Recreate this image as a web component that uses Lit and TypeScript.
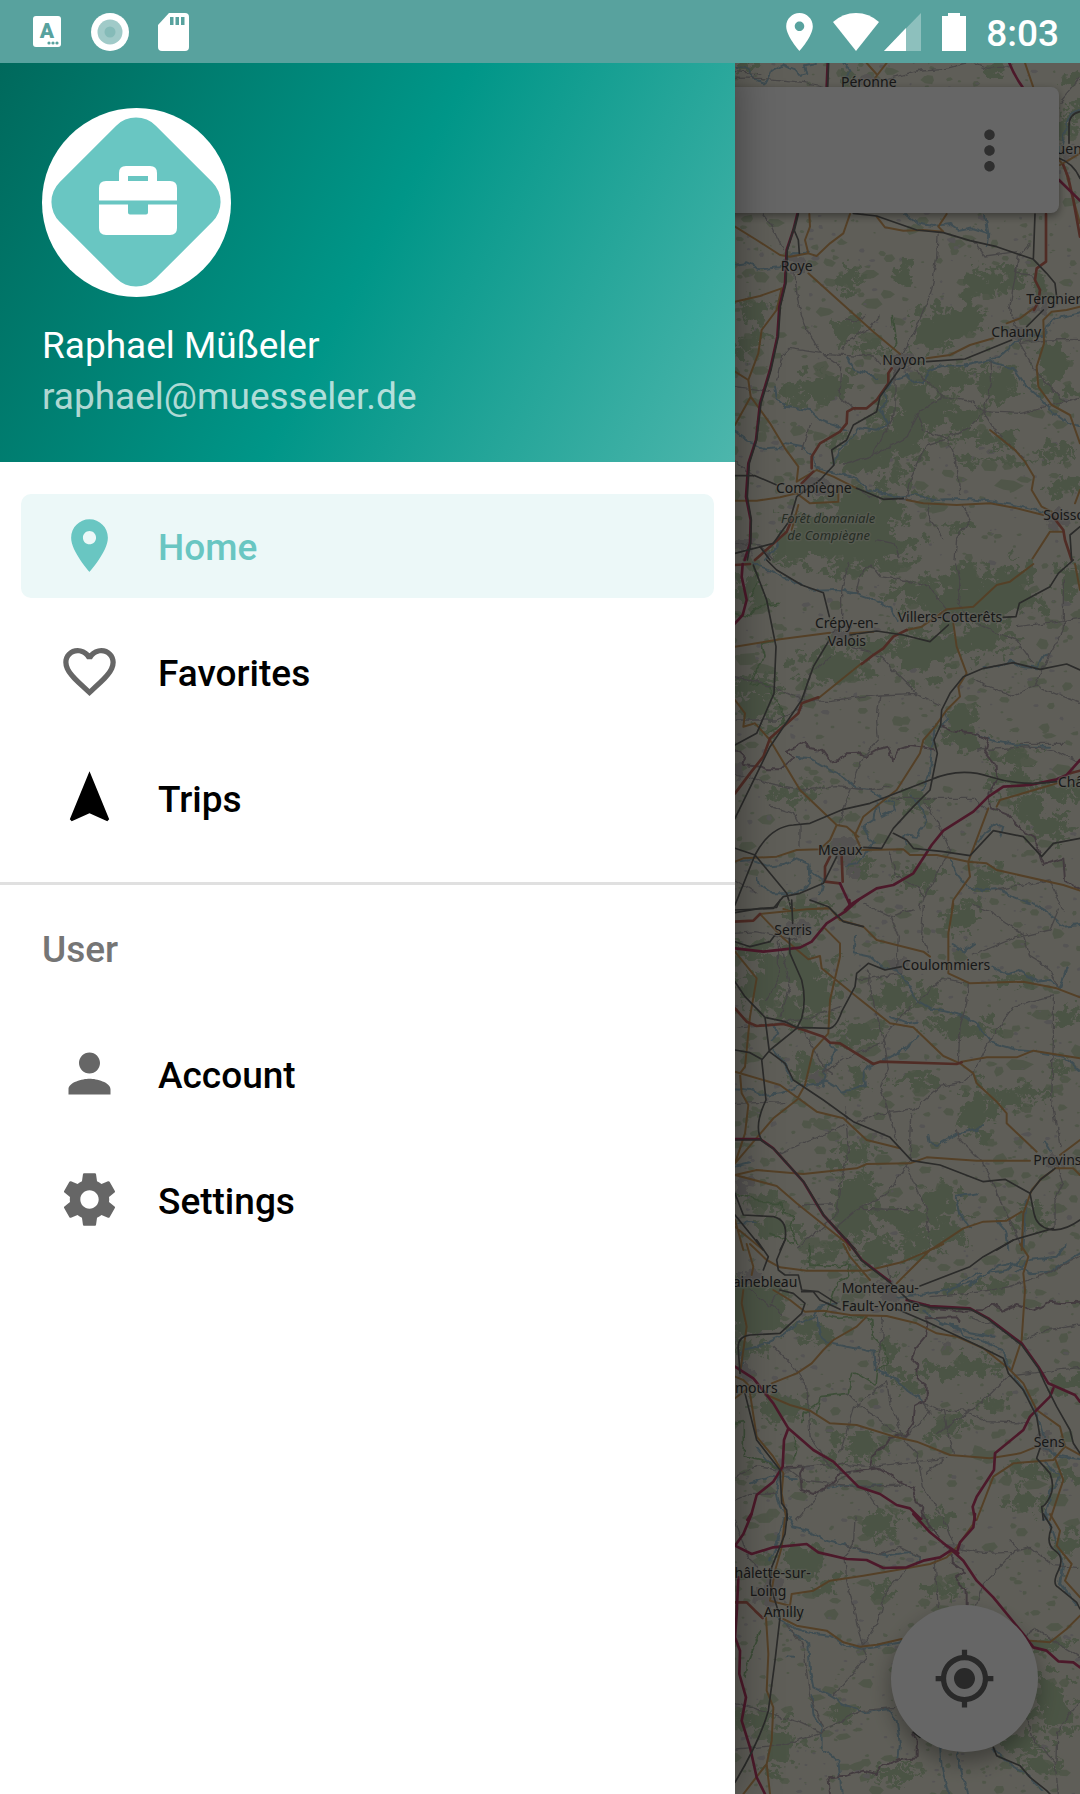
import { LitElement, html, svg, css } from "lit";
import { customElement, property } from "lit/decorators.js";
import { classMap } from "lit/directives/class-map.js";

type Blob = [number, number, number, number];
type Label = [number, number, string, string?];

interface MapSheet {
  dx: number;
  dy: number;
  woods: Blob[];
  rivers: string;
  minor: string;
  border: string;
  park: string;
  secondary: string;
  trunk: string;
  motorway: string;
  rail: string;
  towns: Blob[];
  labels: Label[];
}

/* The map is stored as sheets from north to south, at three units per pixel. */
const SHEETS: MapSheet[] = [
  {
    dx: 2100,
    dy: 0,
    woods: [[885, 213, 9, 11], [440, 235, 10, 8], [150, 200, 20, 6], [1115, 245, 8, 6], [1120, 330, 14, 16], [1090, 380, 8, 16]],
    rivers: "M105 200L140 205L165 240L200 248L215 215L250 195L285 210L300 228L322 222L315 196L345 189M430 189L448 212L440 232L470 262M1140 330L1112 345L1098 375L1092 410L1084 440",
    minor: "M105 235Q200 232 290 245T380 262M560 238L660 210L740 205L800 189M1077 310L1140 235M820 189L860 205L930 200M105 215L180 222",
    border: "",
    park: "",
    secondary: "M500 189L532 225L560 189M532 225L525 235M975 189L1000 262M1077 480Q1095 495 1104 540L1140 670M1140 460L1110 478L1080 495",
    trunk: "M1090 495L1104 530L1120 600L1140 710",
    motorway: "M383 189L380 262M928 189Q942 225 968 262M1077 540L1140 602",
    rail: "M386 189L383 262M1140 335Q1106 342 1107 380L1107 430M1077 475Q1120 490 1140 535",
    towns: [[1100, 460, 30, 20], [500, 240, 30, 14]],
    labels: [[423, 260, "Péronne"], [1037, 462, "Quentin"]],
  },
  {
    dx: 2190,
    dy: 630,
    woods: [[352, 208, 22, 22], [518, 185, 16, 20], [735, 215, 18, 35], [788, 195, 25, 25], [840, 225, 55, 25], [600, 375, 40, 50], [660, 345, 60, 35], [715, 310, 30, 25], [420, 410, 25, 15], [280, 535, 65, 35], [970, 455, 48, 60], [550, 560, 50, 45], [600, 600, 70, 50], [540, 660, 35, 60], [670, 510, 50, 25], [790, 520, 35, 40], [450, 700, 90, 40], [400, 745, 70, 45], [340, 365, 30, 25], [80, 300, 40, 18], [60, 400, 35, 20], [400, 930, 90, 90], [300, 990, 120, 60], [480, 890, 50, 45], [190, 1010, 50, 40], [420, 1010, 100, 50], [690, 630, 40, 36], [800, 690, 50, 14], [820, 750, 80, 9], [680, 950, 20, 12], [200, 560, 16, 14], [840, 520, 20, 20], [990, 720, 40, 20], [990, 830, 30, 12]],
    rivers: "M525 12L560 40L610 48L660 42L690 62L730 55L775 70L770 110M775 70L765 12M15 165L50 160L90 178L150 172L190 130L240 128M1050 310L1010 318L975 325L950 345L945 375L885 375L850 400L820 430L780 450L700 468L640 465L600 480L580 515L555 520L530 495L490 510L465 540L470 580L450 600L475 640L440 662L390 655L330 720L310 760M780 455L850 475L880 520L915 550L960 600L1000 630L1050 650M135 530L140 565L165 590L240 600L270 630L350 660M15 665L60 695L100 718L150 715L170 700L215 708L250 740L260 775L300 785L370 800L420 840L500 860L560 855L600 870L650 868L720 868L790 875L850 885L920 900L960 915M350 440L370 480L410 490L445 505M150 960L140 1010L105 1050",
    minor: "M100 12L125 45L160 120M625 65L620 140L605 240L560 350L520 430M195 190Q200 300 235 370L275 430L335 470L330 560L375 600M275 430L180 415L155 440L140 510M275 430L430 438L450 460M335 420L355 390L420 355L450 315M345 325L380 335L410 318M555 480L640 560L720 570L760 605L800 670L850 720L880 745M640 560L560 610L535 680L430 735L340 765M760 605L870 610L935 595L1010 575L1050 560M760 605L720 650L650 685L590 705L565 760L545 800L530 870M650 685L680 760L690 850M780 455L785 520L760 605M870 400L920 490L1010 580M870 400L960 390L1050 388M870 400L840 290L865 140L900 100M730 90L765 138L860 125M865 140L860 190L905 195L930 240M495 480L495 610L430 730M15 530L60 535L120 545M15 755L70 800M240 640L215 720M560 610L580 660L650 685M380 835L420 860L540 870M590 880L600 930L640 980M700 890L720 930L680 985L675 1050M15 1000L90 1005L130 1050M440 990L490 1000L510 1040",
    border: "",
    park: "M490 320L500 400L480 420",
    secondary: "M15 50L80 90L150 135L180 140L235 130L260 138L300 100L340 70L360 12M238 12L240 50L225 90L235 130M440 20L465 52L520 62L580 60L640 65L625 50L650 12M235 190L330 275L430 365L510 432M15 275L90 258L155 235L140 300L95 360L85 430L55 510L62 560L15 645M62 560L120 640L165 715L205 770L200 815L260 780L310 800L380 835M15 485L55 510M590 445L660 435L720 405L790 385M830 340L870 325L910 295M1050 290L1010 300L965 305L940 330L942 400L920 470L925 530L965 585L1020 615L1050 700M15 872L80 872L150 862L200 850L240 880L325 875L325 830M205 885L185 960M530 870L580 880L680 885L780 880L860 895L940 915M780 660L855 720L885 755L912 800L905 840L935 890L965 905M905 1050L960 965L1000 965M1050 840L1035 880",
    trunk: "M948 12L948 155L920 175L915 210L930 240L925 275L912 300M485 475L475 490L475 520L440 570L410 595L370 595L352 605L350 640L330 665L270 700L245 740L245 775M250 785L215 820M185 930L170 965L75 1050M965 915L1000 960L1005 990L1025 1050",
    motorway: "M202 12L190 60L170 120L165 220L148 290L142 380L120 480L90 580L78 690L55 760L48 860L62 930L60 1000L44 1050",
    rail: "M205 12L193 62L205 90L208 130M205 10L172 120L168 220L151 290L145 380L123 480L93 580L80 690L58 760L52 860L64 930L62 1000L52 1050M370 10L440 18L560 60L640 68L720 92L800 110L910 148L950 190L975 220L980 260M915 12L910 148M940 300L890 350M845 390L705 447L590 455M510 475L450 560L440 605L370 645L350 690L305 720L312 765L270 810L200 860L180 930L130 1000L15 1030M15 797L75 797L140 825M380 835L460 868L520 865M1050 950L1020 975L1025 1050M90 1010L120 1050",
    towns: [[200, 160, 28, 24], [520, 450, 30, 24], [265, 830, 40, 30], [990, 930, 30, 26], [940, 290, 25, 25], [870, 370, 25, 18], [40, 1010, 30, 20]],
    labels: [[152, 182, "Roye"], [889, 283, "Tergnier"], [784, 382, "Chauny"], [457, 464, "Noyon"], [138, 849, "Compiègne"], [153, 940, "Forêt domaniale", "wood"], [172, 990, "de Compiègne", "wood"], [940, 930, "Soissons"]],
  },
  {
    dx: 2190,
    dy: 1680,
    woods: [[320, 320, 80, 40], [430, 265, 70, 25], [560, 290, 60, 45], [640, 260, 60, 35], [800, 110, 80, 50], [700, 60, 70, 30], [690, 130, 140, 36], [570, 90, 50, 20], [840, 60, 45, 35], [700, 480, 40, 45], [750, 240, 60, 36], [70, 440, 50, 40], [90, 380, 40, 20], [690, 540, 50, 16], [560, 720, 26, 24], [180, 700, 40, 16], [400, 925, 24, 14], [560, 960, 40, 28], [850, 660, 50, 30], [900, 740, 36, 46], [960, 800, 36, 24], [350, 30, 24, 14], [1010, 60, 24, 34], [850, 590, 44, 16], [780, 950, 40, 20], [480, 30, 20, 12], [60, 90, 34, 30], [980, 700, 36, 26]],
    rivers: "M70 10L120 30L160 50L250 92L320 90L380 100L440 120L480 145L500 180M760 325L800 318L845 302L880 322L920 325L940 290L960 285M200 590L240 595L290 625L340 650L380 685L420 690L460 715L490 730L495 750L455 770L440 730L430 780L400 800L430 850L380 910L345 915M545 710L580 750L585 790L560 830L520 825L530 850M645 455L655 480L630 500M610 500L600 640L575 690M740 525L800 545L900 560L960 560M740 850L760 820L800 790L820 800L810 830M660 900L680 940L720 990L800 985L850 1010L900 1030M15 905L60 900L110 920L160 915L200 895L235 910L240 970L200 1000L130 1000L90 975L85 950M240 930L280 960L270 1000",
    minor: "M355 12L335 90L335 200L300 220M380 100L395 40L420 12M420 12L450 50L520 60L600 80L650 150M680 12L690 60L685 130M680 130L720 180L800 220L860 240L910 310M15 350L60 360L150 390L220 420L300 425L450 405L560 400L450 290L370 260M450 405L440 480L445 540L400 590L370 670L340 750L330 800M560 400L630 435M730 355L760 375L850 410L920 375L960 395L1050 430M920 375L935 330L1000 210L1000 60M860 200L1050 175M15 645L120 670L220 690L320 680L420 690L480 680M480 715L600 715L730 715L770 750M115 735L190 760L210 800L210 860M580 720L620 780L660 870M660 870L600 980L580 1010L570 1050M480 875L500 950L560 980L580 1010M15 480L140 480L220 440M1000 550L870 550M740 570L900 560L980 575L1050 610M300 290L240 340L220 420M15 960L80 1000M800 990L960 960L1000 1050",
    border: "M15 565L45 590L40 615L95 620L110 628L150 628L190 595L165 575L200 560L225 545L240 565L275 570L300 605L325 600L345 580L385 578L405 588L440 568L475 560L490 600L505 570L540 558L615 568M635 500L680 515L730 520L775 540L765 575L800 620L802 660L775 700L780 740L830 760L875 810L910 830L940 915L1000 895L1005 960L1050 985",
    park: "M15 160L60 170L80 140L150 130M95 250L105 290L80 330L60 375L110 370L130 410L155 450L160 490L110 520M70 20L85 70L60 110M100 250L150 240",
    secondary: "M15 260L150 238L300 218M360 220L430 215M530 210L575 200L650 148L730 140L800 75L840 65L910 12M670 190L680 260L710 340L685 380L690 410L650 450L615 500L580 540L570 580L500 690L400 770L375 825L395 870M395 310L265 415M15 420L45 460L40 500L75 490L120 540L210 690L320 795L350 800L385 830M320 795L300 840L270 868L200 870L140 890L40 895L15 905M400 870L520 868L540 885L620 885L715 905L770 910L800 930L1000 975L1050 992M715 905L775 745M715 910L720 950L670 1020L665 1050M800 740L810 720L930 685L980 670M1035 12L1050 90M160 1047L300 1045",
    trunk: "M530 210L490 230L460 265L430 285L395 312M265 412L215 430L205 460L120 535L100 590L60 640L15 700M15 15L60 12M300 890L285 920L285 965L330 970M335 890L338 965M1050 632L1020 640",
    motorway: "M38 12L35 50L50 120L38 165L15 190M330 970L360 1035L440 985L490 975L550 940L605 855L640 812L730 755L775 710L820 680L900 675L980 658L1010 645L1050 600M360 1035L345 1050",
    rail: "M70 15L110 120L138 260L132 400L80 520L15 555M110 0L140 30L215 75L280 98L298 170M298 240L250 320L215 420L120 560L15 775M360 225L440 213L520 225L600 245L655 195M820 172L858 170L868 130L960 80L985 40L1030 0M1050 330L1010 312L930 328L850 308L760 325L700 350L660 400L635 450L632 495L612 540L622 580L600 690L550 740L490 805L455 865L400 862M490 820L530 840L550 865L640 875L720 887L790 812L880 830L935 890L970 850L1050 835M15 865L75 885L170 1000L185 1050M75 885Q120 800 190 795L240 790L340 748L420 730L600 660Q690 620 780 650T980 665M75 885L15 1035M320 890L280 970L210 1000L160 1010L130 1045L15 1050",
    towns: [[345, 870, 40, 44], [335, 225, 30, 20], [30, 640, 20, 30], [660, 170, 24, 16], [370, 930, 24, 16]],
    labels: [[503, 186, "Villers-Cotterêts"], [255, 204, "Crépy-en-"], [293, 257, "Valois"], [984, 680, "Château-Thierry"], [264, 885, "Meaux"]],
  },
  {
    dx: 2190,
    dy: 2700,
    woods: [[700, 50, 30, 30], [210, 205, 60, 60], [130, 225, 40, 50], [90, 260, 60, 46], [260, 290, 44, 46], [180, 340, 50, 26], [500, 290, 40, 38], [580, 300, 22, 14], [400, 400, 42, 28], [540, 535, 40, 16], [390, 540, 18, 30], [740, 640, 28, 48], [830, 600, 50, 18], [890, 578, 36, 12], [380, 765, 46, 22], [380, 880, 56, 42], [360, 950, 56, 56], [520, 955, 75, 28], [630, 900, 46, 42], [640, 1000, 56, 30], [900, 950, 36, 26], [1010, 350, 22, 14], [720, 390, 44, 22], [640, 370, 30, 12], [990, 500, 18, 16], [230, 500, 26, 26], [90, 900, 50, 12], [120, 980, 50, 22], [850, 240, 30, 10], [60, 150, 34, 14], [250, 30, 20, 18], [200, 30, 20, 12]],
    rivers: "M910 12L960 40L1000 80L1050 75M375 110L370 160L420 170L460 205L500 210L530 250L560 300L600 325L690 345L740 370L790 430L860 450L920 455L1000 470L1050 510M790 200L830 220L870 210L920 245L960 240L990 265L1010 205M665 135L700 155L735 130M480 350L530 370L560 365M565 405L520 450L460 480M430 495L400 515L405 555L340 575L290 545L230 555L205 560L150 580L100 585L60 570L15 565M300 430L320 450L290 500L275 560M130 380L145 400L125 420M130 450L170 500L185 540M595 705L600 730L625 735L680 700L740 690L760 675M945 725L965 760M680 890L740 880M680 890L690 940L720 985M800 965L830 1000L835 1050M890 900L880 1050M15 970L80 965M15 800L60 790",
    minor: "M400 12L480 50L505 110L500 200M580 12L575 110L595 160M725 12L790 40L880 105L900 170L950 200L985 260M730 165L850 115L960 90L985 30M480 50L550 30M145 120L145 240L110 300M150 130L180 260L150 350M380 240L515 220M415 210L430 320L465 430L475 510L450 560L470 620L500 720M540 320L470 400L460 425L340 480L280 520M555 310L640 235L715 250L710 310L690 380L685 485M970 290L850 320L780 420L730 520L700 545L630 560L550 630L440 640L380 670M970 290L970 420L965 600L990 740M15 610L170 605M15 385L70 380L240 355L330 320M220 390L280 500L310 520M350 680L355 760L330 850L320 950L200 1040M545 645L540 780L470 885L380 930L320 980M530 800L590 930L600 1050M150 760L240 720L350 675M680 690L685 715L760 790L880 1050M980 780L1000 850L975 900L975 980M390 925L550 930M15 100L80 95L200 120M345 620L350 660M205 915L310 912",
    border: "",
    park: "M15 880L60 890L100 910L155 910L160 940L190 945L180 980L200 1030M120 1000L190 1030",
    secondary: "M90 42L230 28L300 25L330 60L400 80L440 120L580 155L600 170M670 12L655 100L655 220L720 250L880 245L980 265L1050 292M90 42L160 115L235 178L270 168L275 205L380 290L480 370L550 382L640 468L690 490L730 520L740 550L800 605L830 640L830 670L920 755M285 85L330 130L330 170L300 300L295 400L250 450L225 555L200 600L130 655L15 790M695 485L770 472L860 472L910 452L1050 475M15 515L150 555L260 635L340 655L410 720L510 745M15 155L80 235L60 350L45 500L30 520L35 580L55 615L45 700L15 790M15 825L80 810L220 822L380 805L410 792L540 790L590 772L740 782L900 782M15 825L140 858L200 910L350 1030L360 1050M1050 720L990 765M975 805L1030 805L1050 825M970 810L935 835L905 870L880 940L875 1050M600 1050L640 1025L700 985L760 965L830 962L875 935M15 960L40 1050M15 980L100 1050",
    trunk: "M15 65L70 62L90 42M15 325L50 365L80 378L160 372L215 388L280 410L300 428L330 430L430 492L450 485L680 492L695 487",
    motorway: "M15 145L100 155L210 143L245 125L290 70L345 35L385 0M358 0L360 22M15 717L90 717L130 745L220 845L280 945L375 1050",
    rail: "M15 38L90 25L140 22L150 0M185 0L188 70M178 115L180 160L215 240Q230 300 215 355L200 385L120 450L95 480M240 0L295 20L340 65L400 80M15 125L60 140L120 125L135 105M15 245L45 290L105 352L165 365L200 382L300 385Q320 380 335 335L375 260L380 220L415 190L465 210L515 200M105 352L118 455L165 490L190 540L280 600L370 665L480 712L545 782L630 795L760 845L825 838L900 880L912 940Q920 980 960 988T1050 960M15 450L60 458L95 478L108 600Q70 680 95 720M15 720L92 720L133 748L223 848L283 948L378 1050M15 880L40 945L130 950Q175 960 165 1020L150 1050M15 945L100 1050M975 805L930 840L900 880M800 1050L850 1020L970 985",
    towns: [[40, 860, 24, 30], [200, 90, 30, 24], [500, 195, 24, 18], [440, 710, 20, 14], [975, 780, 30, 24], [270, 530, 24, 16]],
    labels: [[133, 105, "Serris"], [516, 209, "Coulommiers"], [910, 796, "Provins"]],
  },
  {
    dx: 2190,
    dy: 3720,
    woods: [[80, 210, 110, 66], [440, 40, 56, 40], [290, 50, 50, 18], [560, 20, 40, 20], [160, 500, 66, 36], [640, 390, 80, 10], [720, 380, 46, 26], [400, 610, 44, 26], [60, 320, 34, 14], [700, 140, 60, 12], [1000, 430, 36, 16], [640, 560, 34, 22], [900, 700, 40, 18], [880, 780, 36, 30], [1000, 700, 34, 12], [250, 260, 30, 26], [530, 440, 26, 14], [300, 660, 30, 12], [760, 490, 34, 10], [470, 350, 12, 30]],
    rivers: "M1050 40L1000 70L960 95L900 100L850 70L800 80L740 120L680 140L630 155L570 165L500 170M750 100L700 120L650 160M880 50L830 90L770 100L720 135M1010 12L980 50L900 60L860 95M320 190L270 200L250 230L200 250L150 290L100 315L40 330L35 380M300 310L350 320L430 335L435 390L490 410L530 450L580 485M580 215L620 240L690 270L700 290L760 300L820 330L835 380L870 430L920 520L950 620M660 250L720 280L790 290M260 230L275 290L300 310M80 620L110 660L150 690L140 760L150 800L180 840M60 730L120 710L200 715M285 745L350 735L400 740L450 735M945 625L980 650L1050 660M940 660L990 710L960 760L945 840M970 640L1020 650",
    minor: "M470 75L480 120M600 170L720 160L840 140L950 100L1050 50M120 190L160 230M60 150L120 200L160 130M130 320L190 380L230 440L235 510M235 510L240 590L300 680L340 700M460 230L455 300L440 390M470 425L480 490L520 590M470 425L370 505L330 640M520 595L370 480L350 460M520 600L560 640L580 740L640 840M520 595L600 520L580 490L640 512L700 510L770 545L900 550M640 512L670 640M620 580L740 500L830 410L900 400L1050 382M720 230L800 260L870 310M880 300L950 270L1050 255M15 710L80 680L150 690L300 670L420 680L650 655M380 690L280 750L200 840M180 690L220 720L380 740L520 735M15 780L60 760L140 760M400 740L440 800L450 840M640 660L590 700",
    border: "M570 195L620 205L700 212L760 210L790 190L820 212L860 195L910 212L960 185L1000 190L1050 188M690 245L680 232L590 235L585 290L560 320L545 355L565 375L560 415L590 440L590 480L555 500L550 550L525 585L480 590L470 615L430 635L420 680L450 685L490 710L520 730L550 740L560 790L580 800L575 840M450 685L330 700L300 735L250 762L215 750L210 700L220 680L160 680",
    park: "M235 12L240 75L330 80L360 70L355 110L320 130L300 190L280 225L330 235L400 230L425 240L430 290L460 320L475 370L440 395L435 435L380 400L365 400L355 460L270 470L260 520M15 550L40 545L40 650L110 665L150 690M190 590L200 630L190 660M260 490L220 520L215 550",
    secondary: "M50 12L70 80L65 105M60 12L110 60L150 82L230 92L410 92L520 65L590 35L640 12M340 12L360 50L420 120M600 30L555 75L520 110L500 130M870 12L895 50L880 100L885 150L875 300L845 390M130 150L180 180L225 215L280 212L360 225L470 228L560 250L620 280L680 290L760 325L830 380L880 430L920 510L990 560L1005 620L970 660L850 670L790 710L740 840M410 230L380 260L310 300L280 330L245 370L200 400L125 430M110 465L180 495L240 512L300 550L380 555L500 592L560 605L660 645L780 655L870 640L920 620M15 475L60 440L40 420L15 410M40 150L35 190L50 260L30 400M60 460L80 590L130 650L160 700L155 760L170 840M1005 620L1050 645M975 655L1000 720L960 840",
    trunk: "",
    motorway: "M350 0L395 60L480 125M530 180L600 198L720 205L775 235L875 310L925 380L955 430L1035 465L1050 485M15 380L70 415L130 490L175 565L250 630L310 665L385 740L450 762L500 795L540 805L575 840M175 565L162 600L158 680L130 725L80 765L65 820L52 840M970 445L960 470L900 530L880 570L795 640L792 690L740 770L728 800L735 840",
    rail: "M80 0L115 50L100 90M165 0L140 60L145 90L165 105L205 105L215 150L265 155L320 190M150 150L190 160L225 190L215 220L150 280L60 285Q20 290 25 330L30 400M215 155L250 155L270 180L330 208M352 0L395 62L480 128L540 185L600 202L722 208L775 238L875 315L925 385L945 430L980 500L1020 570L1030 610L1050 640M570 138L720 80L760 50L850 0M495 205L600 250L740 315L820 355L835 400L880 450L920 530L930 590M930 625L920 655L960 700Q975 740 960 770T935 800L940 840M45 460L80 600L150 690L155 790L170 810L172 840",
    towns: [[470, 160, 30, 24], [60, 110, 30, 14], [950, 610, 34, 30], [650, 315, 12, 14], [50, 400, 20, 20], [150, 690, 14, 14]],
    labels: [[202, 141, "Fontainebleau", "end"], [335, 160, "Montereau-"], [335, 213, "Fault-Yonne"], [143, 458, "Nemours", "end"], [911, 622, "Sens"]],
  },
  {
    dx: 2190,
    dy: 4542,
    woods: [[220, 150, 60, 50], [440, 30, 50, 24], [1020, 90, 26, 22], [960, 540, 40, 44], [985, 600, 44, 44], [860, 690, 50, 20], [150, 700, 40, 50], [80, 620, 26, 26], [650, 230, 30, 16], [450, 230, 20, 14], [980, 390, 34, 14], [500, 780, 40, 20], [340, 600, 24, 14], [930, 750, 40, 18], [620, 20, 24, 20]],
    rivers: "M180 12L190 40L230 50L290 80L350 95L400 110L470 125L530 115L570 130L560 150M160 12L145 80L120 140M140 310L200 345L250 360L300 365L350 395L400 405L460 395L515 385M180 350L235 390L240 470L250 520L300 545L350 575L400 595L480 585L500 620L510 690L505 730M245 540L250 600L275 640L275 700L325 740L335 840M630 700L635 760L655 840M680 700L690 760L715 840M950 0L975 70L1000 150L990 210L1040 270M790 705L840 750L890 780L940 830M170 427L187 428",
    minor: "M15 15L50 120L100 180M375 12L370 90L345 130L350 200L370 270L380 330L400 390M400 390L440 330L470 230L530 165M400 405L410 430L350 500L310 545M350 95L450 120L510 100L570 130M690 105L760 118L850 115L900 100L970 155L1040 160M850 115L760 210L740 270M870 110L840 80M615 130L620 220L625 280M15 565L110 595L210 625L275 655L310 635L390 590L500 580M170 330L220 400L240 550L280 640M15 705L80 700L170 690L275 655M640 12L670 90M890 610L905 670L975 745L985 840M1050 560L980 655L978 745M890 370L910 340L1000 400L1050 430",
    border: "M580 0L600 40L640 90L665 110L665 145L705 175L680 190L685 210L710 230L710 275M550 655L560 680L560 730L510 735L450 760L440 780L400 770L350 785L295 790L300 840",
    park: "M90 350L70 400L50 450L45 490",
    secondary: "M165 12L155 100L135 170L120 260L180 275L185 240L250 230L300 200L400 185L500 168L600 150L650 130L680 100L730 30L735 0M160 315L200 335L290 350L340 385L390 398L440 392L515 375M108 310L115 420L110 530L130 580L125 680L110 750L120 840M110 750L40 840M960 0L990 50L980 95L1025 150L1005 200L1050 250M900 380L960 385L1010 345L1050 305",
    trunk: "M15 265L50 265L75 290L98 312",
    motorway: "M65 0L40 60L15 95L65 120L130 100L230 90L265 115L350 135L410 138L460 162L530 160L580 140L630 130L665 108L700 140L740 200L790 250L880 360L910 400L950 410L985 442L1030 445L1050 460M550 0L600 55L650 95L685 118M735 0L730 40L690 85L680 118M25 190L20 300L15 370L30 410L28 480L48 550L35 620L60 700L80 790L105 840",
    rail: "M172 0L165 60L125 160L120 210L150 310L135 440L115 590Q90 680 15 805M940 0L965 40Q945 90 975 110T985 170T985 220L1040 265L1050 285M550 655L570 670M790 700L800 725L870 755L900 790L950 830L960 840",
    towns: [[120, 230, 40, 50], [670, 105, 16, 16], [400, 395, 16, 12], [760, 440, 16, 12]],
    labels: [[242, 192, "Châlette-sur-", "end"], [59, 246, "Loing"], [101, 308, "Amilly"]],
  },
];

/* Small deterministic generator, so that the map is the same on every load. */
function randomFrom(seed: number): () => number {
  let s = seed;
  return () => {
    s = (s * 16807) % 2147483647;
    return s / 2147483647;
  };
}

function patch([cx, cy, rx, ry]: Blob, rnd: () => number, points: number): string {
  let d = "";
  for (let i = 0; i < points; i++) {
    const a = (i / points) * Math.PI * 2;
    const k = 0.75 + rnd() * 0.6;
    const x = Math.round(cx + Math.cos(a) * rx * k);
    const y = Math.round(cy + Math.sin(a) * ry * k);
    d += (i ? "L" : "M") + x + " " + y;
  }
  return d + "Z";
}

/* A wood and the small groves that lie round its edge. */
function wood(b: Blob, rnd: () => number): string {
  let d = patch(b, rnd, 16);
  for (let i = 0; i < 9; i++) {
    const a = rnd() * Math.PI * 2;
    const k = 1.2 + rnd() * 0.8;
    const r = 3 + rnd() * 11;
    d += patch([b[0] + Math.cos(a) * b[2] * k, b[1] + Math.sin(a) * b[3] * k, r * 1.6, r], rnd, 7);
  }
  return d;
}

function copses(count: number, seed: number, size: number): string {
  const rnd = randomFrom(seed);
  let d = "";
  for (let i = 0; i < count; i++) {
    const x = 2190 + rnd() * 1050;
    const y = 189 + rnd() * 5193;
    const r = 2 + rnd() * rnd() * size;
    d += patch([x, y, r * (1 + rnd()), r], rnd, 6);
  }
  return d;
}

@customElement("region-map")
export class RegionMap extends LitElement {
  static styles = css`
    :host { display: block; background: #eeecdc; }
    svg { display: block; width: 100%; height: 100%; }
    path { fill: none; stroke-linejoin: round; stroke-linecap: round; }
    .wood { fill: #bbd3ac; fill-rule: nonzero; }
    .copse { fill: #c8d8b7; }
    .town { fill: #d2cecb; }
    .hamlet { fill: #d5d1d2; }
    .river { stroke: #9fc0cd; stroke-width: 6; }
    .minor { stroke: #b3afb0; stroke-width: 4; }
    .border { stroke: #a8959f; stroke-width: 6; }
    .park { stroke: #9cc38f; stroke-width: 5; }
    .secondary { stroke: #d3a062; stroke-width: 6; }
    .trunk { stroke: #c86e5e; stroke-width: 8; }
    .motorway { stroke: #bf3f69; stroke-width: 8; }
    .rail { stroke: #6b6b69; stroke-width: 5; }
    text {
      font: 42px "Noto Sans", "Open Sans", sans-serif;
      fill: #3c3c3c;
      stroke: rgba(238, 236, 225, 0.5);
      stroke-width: 8px;
      paint-order: stroke;
      stroke-linejoin: round;
    }
    .end { text-anchor: end; }
    .forest-name { font-style: italic; font-size: 39px; fill: #60705c; }
  `;

  private sheet(s: MapSheet, index: number) {
    const rnd = randomFrom(97 + index * 31);
    const at = `translate(${s.dx} ${s.dy})`;
    const woods = s.woods.map((b) => wood(b, rnd)).join("");
    const towns = s.towns.map((b) => patch(b, rnd, 12)).join("");
    return svg`
      <g transform=${at}>
        <g filter="url(#rough)">
          <path class="wood" d=${woods}></path>
          <path class="town" d=${towns}></path>
        </g>
        <g filter="url(#wavy)">
          <path class="river" d=${s.rivers}></path>
          <path class="border" d=${s.border}></path>
          <path class="park" d=${s.park}></path>
          <path class="minor" d=${s.minor}></path>
        </g>
        <path class="secondary" d=${s.secondary}></path>
        <path class="trunk" d=${s.trunk}></path>
        <path class="motorway" d=${s.motorway}></path>
        <path class="rail" d=${s.rail}></path>
      </g>`;
  }

  private names(s: MapSheet) {
    return svg`
      <g transform=${`translate(${s.dx} ${s.dy})`}>
        ${s.labels.map(
          ([x, y, name, kind]) => svg`
            <text x=${x} y=${y} class=${classMap({ end: kind === "end", "forest-name": kind === "wood" })}>${name}</text>`
        )}
      </g>`;
  }

  render() {
    return html`
      <svg viewBox="0 189 3240 5193" preserveAspectRatio="xMaxYMin slice" role="img" aria-label="Map">
        <defs>
          <filter id="rough" filterUnits="userSpaceOnUse" x="0" y="-60" width="1200" height="1200">
            <feTurbulence type="fractalNoise" baseFrequency="0.035" numOctaves="3" seed="4"></feTurbulence>
            <feDisplacementMap in="SourceGraphic" scale="64" xChannelSelector="R" yChannelSelector="G"></feDisplacementMap>
          </filter>
          <filter id="wavy" filterUnits="userSpaceOnUse" x="0" y="-60" width="1200" height="1200">
            <feTurbulence type="fractalNoise" baseFrequency="0.04" numOctaves="2" seed="9"></feTurbulence>
            <feDisplacementMap in="SourceGraphic" scale="18" xChannelSelector="R" yChannelSelector="G"></feDisplacementMap>
          </filter>
        </defs>
        <path class="copse" d=${copses(2200, 11, 18)}></path>
        <path class="hamlet" d=${copses(900, 53, 7)}></path>
        ${SHEETS.map((s, i) => this.sheet(s, i))}
        ${SHEETS.map((s) => this.names(s))}
      </svg>`;
  }
}

const ICONS = {
  place: "M12 2C8.13 2 5 5.13 5 9c0 5.25 7 13 7 13s7-7.75 7-13c0-3.87-3.13-7-7-7zm0 9.5c-1.38 0-2.5-1.12-2.5-2.5s1.12-2.5 2.5-2.5 2.5 1.12 2.5 2.5-1.12 2.5-2.5 2.5z",
  heart: "M16.5 3c-1.74 0-3.41.81-4.5 2.09C10.91 3.81 9.24 3 7.5 3 4.42 3 2 5.42 2 8.5c0 3.78 3.4 6.86 8.55 11.54L12 21.35l1.45-1.32C18.6 15.36 22 12.28 22 8.5 22 5.42 19.58 3 16.5 3zm-4.4 15.55l-.1.1-.1-.1C7.14 14.24 4 11.39 4 8.5 4 6.5 5.5 5 7.5 5c1.54 0 3.04.99 3.57 2.36h1.87C13.46 5.99 14.96 5 16.5 5c2 0 3.5 1.5 3.5 3.5 0 2.89-3.14 5.74-7.9 10.05z",
  navigation: "M12 2L4.5 20.29l.71.71L12 18l6.79 3 .71-.71z",
  person: "M12 12c2.21 0 4-1.79 4-4s-1.79-4-4-4-4 1.79-4 4 1.79 4 4 4zm0 2c-2.67 0-8 1.34-8 4v2h16v-2c0-2.66-5.33-4-8-4z",
  settings: "M19.43 12.98c.04-.32.07-.64.07-.98s-.03-.66-.07-.98l2.11-1.65c.19-.15.24-.42.12-.64l-2-3.46c-.12-.22-.39-.3-.61-.22l-2.49 1c-.52-.4-1.08-.73-1.69-.98l-.38-2.65C14.46 2.18 14.25 2 14 2h-4c-.25 0-.46.18-.49.42l-.38 2.65c-.61.25-1.17.59-1.69.98l-2.49-1c-.23-.09-.49 0-.61.22l-2 3.46c-.13.22-.07.49.12.64l2.11 1.65c-.04.32-.07.65-.07.98s.03.66.07.98l-2.11 1.65c-.19.15-.24.42-.12.64l2 3.46c.12.22.39.3.61.22l2.49-1c.52.4 1.08.73 1.69.98l.38 2.65c.03.24.24.42.49.42h4c.25 0 .46-.18.49-.42l.38-2.65c.61-.25 1.17-.59 1.69-.98l2.49 1c.23.09.49 0 .61-.22l2-3.46c.12-.22.07-.49-.12-.64l-2.11-1.65zM12 15.5c-1.93 0-3.5-1.57-3.5-3.5s1.57-3.5 3.5-3.5 3.5 1.57 3.5 3.5-1.57 3.5-3.5 3.5z",
  more: "M12 8c1.1 0 2-.9 2-2s-.9-2-2-2-2 .9-2 2 .9 2 2 2zm0 2c-1.1 0-2 .9-2 2s.9 2 2 2 2-.9 2-2-.9-2-2-2zm0 6c-1.1 0-2 .9-2 2s.9 2 2 2 2-.9 2-2-.9-2-2-2z",
  locate: "M12 8c-2.21 0-4 1.79-4 4s1.79 4 4 4 4-1.79 4-4-1.79-4-4-4zm8.94 3c-.46-4.17-3.77-7.48-7.94-7.94V1h-2v2.06C6.83 3.52 3.52 6.83 3.06 11H1v2h2.06c.46 4.17 3.77 7.48 7.94 7.94V23h2v-2.06c4.17-.46 7.48-3.77 7.94-7.94H23v-2h-2.06zM12 19c-3.87 0-7-3.13-7-7s3.13-7 7-7 7 3.13 7 7-3.13 7-7 7z",
};

type IconName = keyof typeof ICONS;

const icon = (name: IconName) =>
  html`<svg class="icon" viewBox="0 0 24 24" aria-hidden="true"><path d=${ICONS[name]}></path></svg>`;

@customElement("status-bar")
export class StatusBar extends LitElement {
  static styles = css`
    :host {
      display: flex;
      align-items: center;
      justify-content: space-between;
      height: 63px;
      padding: 0 21px 0 33px;
      background: #58a29e;
      color: #fff;
      font: 500 37px/42px Roboto, sans-serif;
    }
    .group { display: flex; align-items: center; gap: 29px; }
    .system { gap: 20px; }
    .network { display: flex; gap: 5px; }
    time { padding-top: 4px; }
    svg { display: block; fill: #fff; }
    .letter { font: 900 21px Roboto, sans-serif; fill: #58a29e; text-anchor: middle; }
    .cut { fill: #58a29e; }
    .ring { fill: #a0cac8; }
    .core { fill: #85bbb8; }
    .faint { opacity: 0.32; }
  `;

  render() {
    return html`
      <div class="group">
        <svg width="29" height="31" viewBox="0 0 29 31" aria-hidden="true">
          <rect width="28" height="31" rx="3"></rect>
          <text class="letter" x="14" y="22">A</text>
          <circle class="cut" cx="16" cy="27" r="1.6"></circle>
          <circle class="cut" cx="20" cy="27" r="1.6"></circle>
          <circle class="cut" cx="24" cy="27" r="1.6"></circle>
        </svg>
        <svg width="38" height="38" viewBox="0 0 38 38" aria-hidden="true">
          <circle cx="19" cy="19" r="19"></circle>
          <circle class="ring" cx="19" cy="19" r="12.5"></circle>
          <circle class="core" cx="19" cy="19" r="5.5"></circle>
        </svg>
        <svg width="31" height="38" viewBox="0 0 31 38" aria-hidden="true">
          <path d="M11 0h16q4 0 4 4v30q0 4-4 4H4q-4 0-4-4V12z"></path>
          <path class="cut" d="M12 4h3.5v8H12zM17.500 4H21v8h-3.500zM23 4h3.500v8H23z"></path>
        </svg>
      </div>
      <div class="group system">
        <svg width="27" height="38" viewBox="5 2 14 20" aria-hidden="true">
          <path d=${ICONS.place}></path>
        </svg>
        <div class="network">
          <svg width="46" height="38" viewBox="0 0 46 38" aria-hidden="true">
            <path d="M0 9Q10 0 23 0T46 9L23 38z"></path>
          </svg>
          <svg width="37" height="38" viewBox="0 0 37 38" aria-hidden="true">
            <path class="faint" d="M37 0v38H0z"></path>
            <path d="M22 15v23H0z"></path>
          </svg>
        </div>
        <svg width="25" height="38" viewBox="0 0 25 38" aria-hidden="true">
          <path d="M7 0h12v3h6v35H1V3h6z"></path>
        </svg>
        <time>8:03</time>
      </div>`;
  }
}

@customElement("nav-entry")
export class NavEntry extends LitElement {
  @property() name: IconName = "place";
  @property() label = "";
  @property({ type: Boolean }) active = false;
  @property({ type: Boolean }) dark = false;

  static styles = css`
    :host { display: block; padding: 11px 21px; }
    a {
      box-sizing: border-box;
      display: flex;
      align-items: center;
      gap: 37px;
      height: 104px;
      padding: 0 37px 2px;
      border-radius: 10px;
      color: #000;
      text-decoration: none;
      font: 500 37px/42px Roboto, sans-serif;
    }
    span { padding-top: 6px; }
    .icon { width: 63px; height: 63px; fill: #666; }
    .dark .icon { fill: #000; }
    .active { background: #ecf8f8; color: #69c6c2; }
    .active .icon { fill: #69c6c2; }
  `;

  render() {
    return html`
      <a href="#" class=${classMap({ active: this.active, dark: this.dark })} aria-current=${this.active ? "page" : "false"}>
        ${icon(this.name)}<span>${this.label}</span>
      </a>`;
  }
}

@customElement("nav-drawer")
export class NavDrawer extends LitElement {
  static styles = css`
    :host { display: block; background: #fff; font: 400 37px/51px Roboto, sans-serif; }
    header {
      padding: 45px 42px 40px;
      background: linear-gradient(118deg, #00695c, #009688 50%, #4db6ac);
      color: #fff;
    }
    .avatar { display: block; width: 189px; height: 189px; margin-bottom: 23px; }
    .disc, .case { fill: #fff; }
    .diamond, .gap { fill: #69c6c2; }
    .name, .mail { margin: 0; }
    .mail { color: rgba(255, 255, 255, 0.7); }
    .group { padding: 21px 0; }
    .user { padding: 0; border-top: 3px solid #e0e0e0; }
    h2 { margin: 0; padding: 4px 42px 0; color: #757575; font: 500 37px/122px Roboto, sans-serif; }
  `;

  render() {
    return html`
      <header>
        <svg class="avatar" viewBox="0 0 189 189" role="img" aria-label="Profile picture">
          <circle class="disc" cx="94.500" cy="94.500" r="94.500"></circle>
          <rect class="diamond" x="26" y="26" width="136" height="136" rx="28" transform="rotate(45 94 94)"></rect>
          <path class="case" d="M77 73v-8q0-7 7-7h24q7 0 7 7v8h13q7 0 7 7v40q0 7-7 7H64q-7 0-7-7V80q0-7 7-7z"></path>
          <path class="gap" d="M86 68h20v5H86zM57 92.500h78v4h-29v8q0 2-2 2H88q-2 0-2-2v-8H57z"></path>
        </svg>
        <p class="name">Raphael Müßeler</p>
        <p class="mail">raphael@muesseler.de</p>
      </header>
      <nav>
        <div class="group">
          <nav-entry name="place" label="Home" active></nav-entry>
          <nav-entry name="heart" label="Favorites"></nav-entry>
          <nav-entry name="navigation" label="Trips" dark></nav-entry>
        </div>
        <div class="group user">
          <h2>User</h2>
          <nav-entry name="person" label="Account"></nav-entry>
          <nav-entry name="settings" label="Settings"></nav-entry>
        </div>
      </nav>`;
  }
}

@customElement("app-root")
export class AppRoot extends LitElement {
  static styles = css`
    :host { display: flex; flex-direction: column; min-height: 100vh; }
    main { position: relative; flex: 1; display: grid; overflow: hidden; }
    .controls, .scrim, nav-drawer { grid-area: 1 / 1; min-height: 0; min-width: 0; }
    region-map { position: absolute; inset: 0; }
    .controls {
      position: relative;
      display: flex;
      flex-direction: column;
      justify-content: space-between;
      align-items: flex-end;
      padding: 24px 21px 42px;
    }
    .search {
      box-sizing: border-box;
      display: flex;
      align-items: center;
      justify-content: flex-end;
      width: 100%;
      height: 126px;
      padding-right: 38px;
      border-radius: 8px;
      background: #fff;
      box-shadow: 0 3px 8px rgba(0, 0, 0, 0.4);
    }
    button { display: grid; place-items: center; padding: 0; border: 0; background: #fff; }
    .icon { width: 63px; height: 63px; fill: #757575; }
    .locate {
      width: 147px;
      height: 147px;
      margin-right: 21px;
      border-radius: 50%;
      box-shadow: 0 10px 22px rgba(0, 0, 0, 0.35);
    }
    .locate .icon { fill: #666; }
    .scrim { position: relative; background: rgba(0, 0, 0, 0.6); }
    nav-drawer {
      position: relative;
      width: min(735px, 80%);
      box-shadow: 0 0 42px rgba(0, 0, 0, 0.4);
    }
  `;

  render() {
    return html`
      <status-bar></status-bar>
      <main>
        <region-map></region-map>
        <div class="controls">
          <div class="search">
            <button type="button" aria-label="More options">${icon("more")}</button>
          </div>
          <button type="button" class="locate" aria-label="My location">${icon("locate")}</button>
        </div>
        <div class="scrim"></div>
        <nav-drawer></nav-drawer>
      </main>`;
  }
}
